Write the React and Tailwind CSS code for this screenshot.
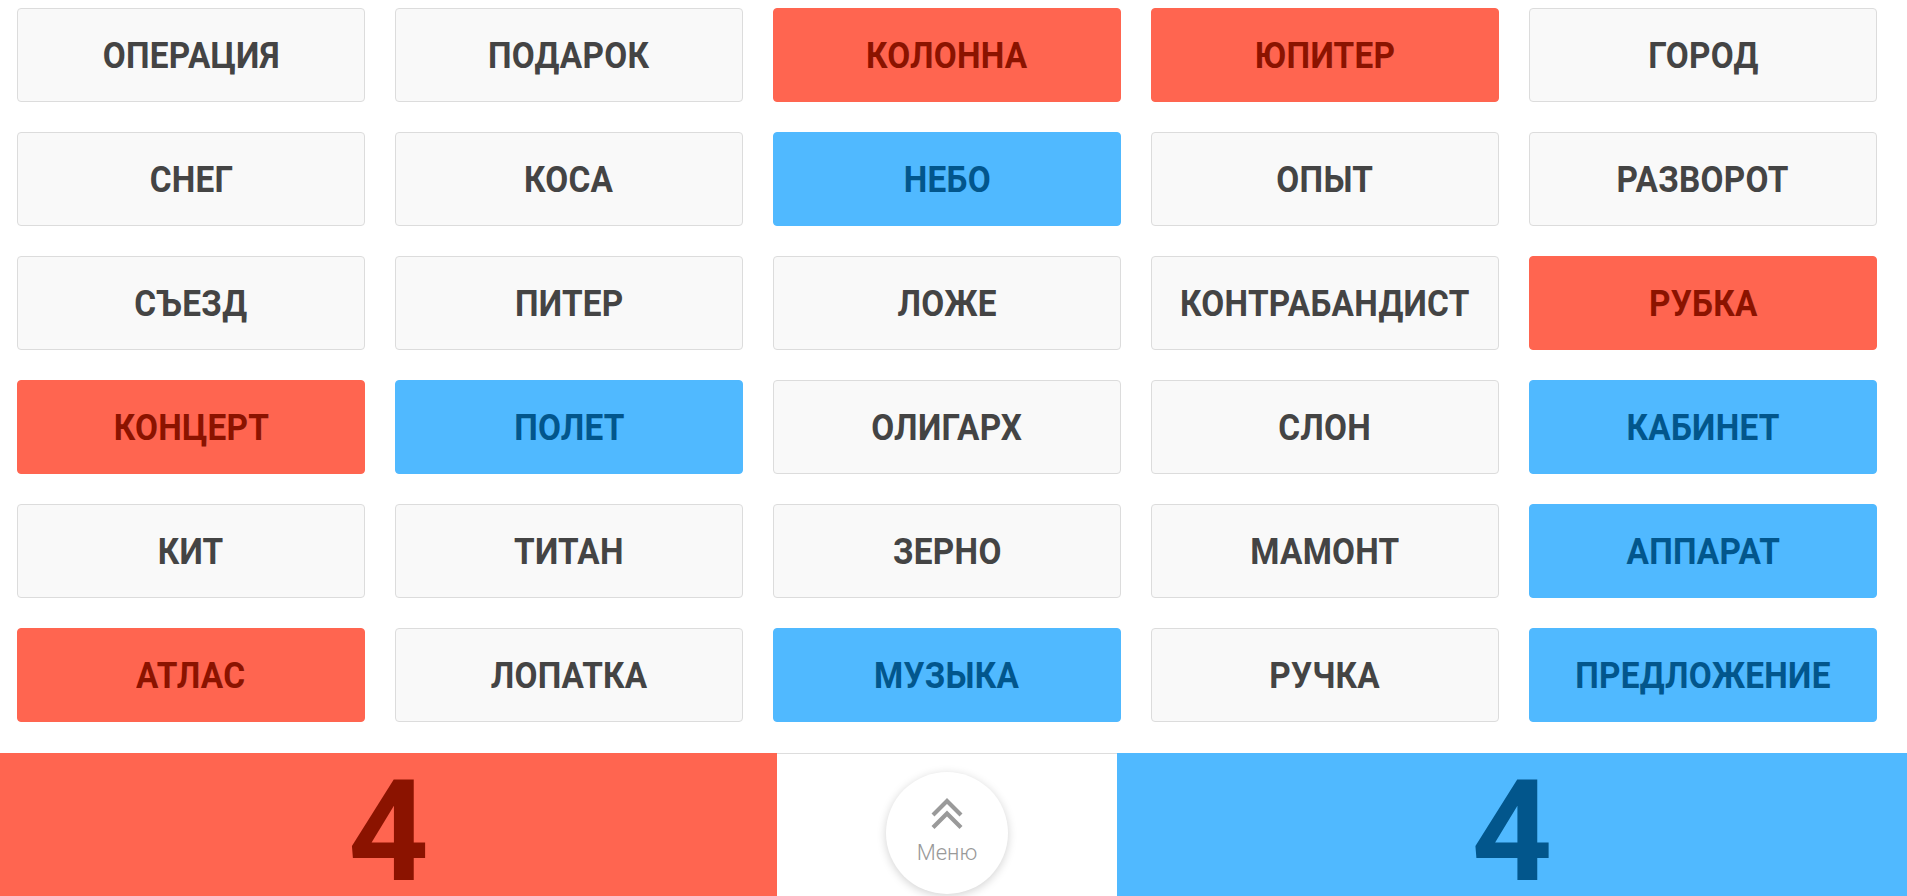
const words = [
    ["ОПЕРАЦИЯ", "n"], ["ПОДАРОК", "n"], ["КОЛОННА", "r"], ["ЮПИТЕР", "r"], ["ГОРОД", "n"],
    ["СНЕГ", "n"], ["КОСА", "n"], ["НЕБО", "b"], ["ОПЫТ", "n"], ["РАЗВОРОТ", "n"],
    ["СЪЕЗД", "n"], ["ПИТЕР", "n"], ["ЛОЖЕ", "n"], ["КОНТРАБАНДИСТ", "n"], ["РУБКА", "r"],
    ["КОНЦЕРТ", "r"], ["ПОЛЕТ", "b"], ["ОЛИГАРХ", "n"], ["СЛОН", "n"], ["КАБИНЕТ", "b"],
    ["КИТ", "n"], ["ТИТАН", "n"], ["ЗЕРНО", "n"], ["МАМОНТ", "n"], ["АППАРАТ", "b"],
    ["АТЛАС", "r"], ["ЛОПАТКА", "n"], ["МУЗЫКА", "b"], ["РУЧКА", "n"], ["ПРЕДЛОЖЕНИЕ", "b"],
]

const styles = {
    n: "bg-[#f9f9f9] border border-[#dcdcdc] text-[#444444]",
    r: "bg-[#ff6550] border border-[#ff6550] text-[#8b1300]",
    b: "bg-[#50b9ff] border border-[#50b9ff] text-[#02568c]",
}

function Card({ word, kind }) {
    return (
        <div className={"h-[94px] rounded-[4px] flex items-center justify-center " + styles[kind]}>
            <span className="font-['Roboto',sans-serif] font-bold text-[37px] leading-none tracking-[0.3px] scale-x-[0.9] inline-block">
                {word}
            </span>
        </div>
    )
}

// double chevron drawn by hand, lucide's one has too much padding
function Chevrons() {
    return (
        <svg width="34" height="31" viewBox="0 0 34 31" fill="none" stroke="#9a9a9a" strokeWidth="4.2" strokeLinecap="butt" strokeLinejoin="miter">
            <path d="M3 17 L17 3 L31 17" />
            <path d="M3 29.5 L17 15.5 L31 29.5" />
        </svg>
    )
}

export default function App() {
    return (
        <div className="h-screen overflow-hidden bg-white flex flex-col font-['Roboto',sans-serif]">
            <div className="grid grid-cols-[repeat(5,348px)] gap-[30px] pl-[17px] pt-[8px]">
                {words.map(([w, k]) => <Card key={w} word={w} kind={k} />)}
            </div>
            <div className="mt-[31px] flex h-[143px]">
                <div className="w-[777px] bg-[#ff6550] flex justify-center pt-[24px]">
                    <span className="font-bold text-[141px] leading-[110px] h-[110px] text-[#8b1300]">4</span>
                </div>
                <div className="flex-1 border-t border-[#dddddd] flex justify-center pt-[18px]">
                    <button className="w-[122px] h-[122px] rounded-full bg-white shadow-[0_2px_10px_rgba(0,0,0,0.18)] flex flex-col items-center pt-[26px]">
                        <Chevrons />
                        <span className="text-[22px] font-light text-[#999999] leading-none mt-[13px]">Меню</span>
                    </button>
                </div>
                <div className="w-[790px] bg-[#50b9ff] flex justify-center pt-[24px]">
                    <span className="font-bold text-[141px] leading-[110px] h-[110px] text-[#02568c]">4</span>
                </div>
            </div>
        </div>
    )
}
